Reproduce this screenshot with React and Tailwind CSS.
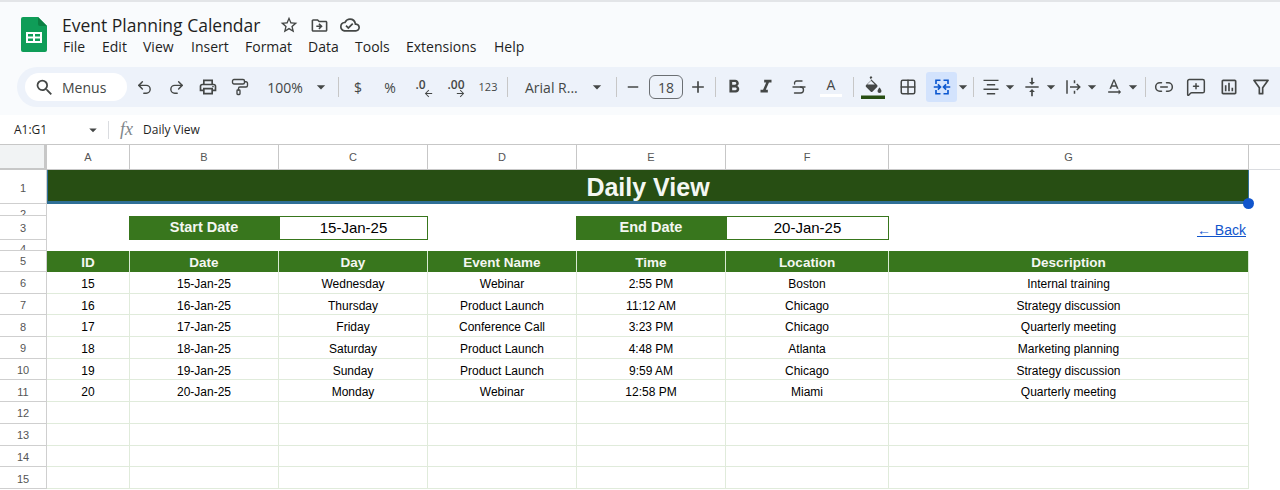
import React from "react";
import {
  MdOutlineStarBorder, MdOutlineDriveFileMove, MdOutlineCloudDone, MdSearch,
  MdOutlinePrint, MdArrowDropDown, MdRemove, MdAdd, MdFormatBold, MdFormatItalic,
  MdTextRotationNone, MdOutlineInsertChart, MdArrowBack, MdArrowForward,
} from "react-icons/md";
import { Undo2, Redo2, PaintRoller, Strikethrough, Grid2x2, Link2, MessageSquarePlus } from "lucide-react";

const menus = [
  ["File", "w-[39px]"], ["Edit", "w-[41px]"], ["View", "w-[48px]"], ["Insert", "w-[54px]"], ["Format", "w-[63px]"],
  ["Data", "w-[47px]"], ["Tools", "w-[51px]"], ["Extensions", "w-[88px]"], ["Help", "w-[40px]"],
];

const columns = ["A", "B", "C", "D", "E", "F", "G"];
const heads = ["ID", "Date", "Day", "Event Name", "Time", "Location", "Description"];
const events = [
  ["15", "15-Jan-25", "Wednesday", "Webinar", "2:55 PM", "Boston", "Internal training"],
  ["16", "16-Jan-25", "Thursday", "Product Launch", "11:12 AM", "Chicago", "Strategy discussion"],
  ["17", "17-Jan-25", "Friday", "Conference Call", "3:23 PM", "Chicago", "Quarterly meeting"],
  ["18", "18-Jan-25", "Saturday", "Product Launch", "4:48 PM", "Atlanta", "Marketing planning"],
  ["19", "19-Jan-25", "Sunday", "Product Launch", "9:59 AM", "Chicago", "Strategy discussion"],
  ["20", "20-Jan-25", "Monday", "Webinar", "12:58 PM", "Miami", "Quarterly meeting"],
  ["", "", "", "", "", "", ""],
  ["", "", "", "", "", "", ""],
  ["", "", "", "", "", "", ""],
  ["", "", "", "", "", "", ""],
];

const Btn = ({ children, className = "w-8" }) => (
  <div className={`relative flex h-full shrink-0 items-center justify-center text-[#444746] ${className}`}>{children}</div>
);
const Sep = ({ className = "" }) => <div className={`h-5 w-px shrink-0 bg-[#c7c7c7] ${className}`} />;
const Caret = ({ className = "w-[10px]" }) => (
  <Btn className={className}><MdArrowDropDown size={20} className="shrink-0" /></Btn>
);

const RowNum = ({ n, className = "items-center pt-[2px]" }) => (
  <div className={`flex justify-center overflow-hidden border-r border-b border-[#cfcfcf] text-[11px] leading-4 text-[#555] ${className}`}>{n}</div>
);

const SheetsLogo = () => (
  <svg width="26" height="35" viewBox="0 0 26 35" className="shrink-0">
    <path d="M2 0h15l9 9v24a2 2 0 0 1-2 2H2a2 2 0 0 1-2-2V2a2 2 0 0 1 2-2z" fill="#0f9d58" />
    <path d="M17 0l9 9h-7a2 2 0 0 1-2-2z" fill="#0b8043" />
    <path d="M5 15h16v11H5z" fill="#fff" />
    <path d="M7 17v2.5h5V17zM14 17v2.5h5V17zM7 21.5V24h5v-2.5zM14 21.5V24h5v-2.5z" fill="#0f9d58" />
  </svg>
);

const MergeIcon = () => (
  <svg width="18" height="18" viewBox="0 0 24 24" fill="none" stroke="#0b57d0" strokeWidth="2.2">
    <path d="M4 8V3h6M4 16v5h6M20 8V3h-6M20 16v5h-6" />
    <path d="M1 12h8M6.500 8.500L10 12l-3.500 3.500M23 12h-8M17.500 8.500L14 12l3.500 3.500" />
  </svg>
);

const WrapIcon = () => (
  <svg width="18" height="18" viewBox="0 0 24 24" fill="none" stroke="#444746" strokeWidth="2">
    <path d="M4 3v18M14 3v4M14 17v4M8 12h13M17 8l4 4-4 4" />
  </svg>
);

const FillIcon = () => (
  <svg width="26" height="26" viewBox="0 0 26 26">
    <path d="M11 2l1.400 1.400-1.500 1.500 6.200 6.200a1.400 1.400 0 0 1 0 2l-4.500 4.500a1.400 1.400 0 0 1-2 0l-4.500-4.500a1.400 1.400 0 0 1 0-2l5.200-5.200L9.600 3.400zM11 6.800L7.200 10.600h7.600z" fill="#444746" />
    <path d="M19.500 13.500s2 2.200 2 3.500a2 2 0 0 1-4 0c0-1.300 2-3.500 2-3.500z" fill="#444746" />
    <path d="M1 21.500h24V25H1z" fill="#274e13" />
  </svg>
);

const AlignIcon = () => (
  <svg width="20" height="20" viewBox="0 0 24 24" fill="none" stroke="#444746" strokeWidth="1.700">
    <path d="M3 4h18M7 9.300h10M3 14.600h18M7 20h10" />
  </svg>
);

const ValignIcon = () => (
  <svg width="20" height="20" viewBox="0 0 24 24" fill="#444746">
    <path d="M4 11h16v2H4zM12 9.500L8.500 6H11V1h2v5h2.500zM12 14.500l3.500 3.500H13v5h-2v-5H8.500z" />
  </svg>
);

const FunnelIcon = () => (
  <svg width="20" height="20" viewBox="0 0 24 24" fill="none" stroke="#444746" strokeWidth="2" strokeLinejoin="round">
    <path d="M3.500 4h17L14 13v7h-4v-7z" />
  </svg>
);

export default function App() {
  return (
    <div className="h-[490px] w-[1280px] overflow-hidden bg-white font-['Open_Sans',sans-serif]">
      <div className="h-[115px] border-t-2 border-[#e3e5e8] bg-[#f9fbfd]">
        <div className="flex h-[65px] items-start pt-[15px] pl-[21px]">
          <SheetsLogo />
          <div className="ml-[15px] -mt-[4px]">
            <div className="flex h-[24px] items-center">
              <span className="w-[217px] text-[17.5px] leading-6 text-[#1f1f1f]">Event Planning Calendar</span>
              <MdOutlineStarBorder size={20} className="text-[#444746]" />
              <MdOutlineDriveFileMove size={19} className="ml-[11px] text-[#444746]" />
              <MdOutlineCloudDone size={20} className="ml-[11px] text-[#444746]" />
            </div>
            <div className="ml-px flex text-[14px] leading-5 text-[#1f1f1f]">
              {menus.map(([m, w]) => (
                <div key={m} className={w}>{m}</div>
              ))}
            </div>
          </div>
        </div>

        <div className="ml-[17px] flex h-[40px] items-center rounded-l-full bg-[#edf2fa] pl-2 text-[#444746]">
          <div className="mr-px flex h-[28px] w-[102px] shrink-0 items-center rounded-full bg-white pl-[9px] text-[14px]">
            <MdSearch size={21} className="shrink-0" />
            <span className="ml-[7px]">Menus</span>
          </div>
          <Btn><Undo2 size={17} strokeWidth={2} /></Btn>
          <Btn><Redo2 size={17} strokeWidth={2} /></Btn>
          <Btn><MdOutlinePrint size={20} /></Btn>
          <Btn><PaintRoller size={18} strokeWidth={1.8} /></Btn>
          <Btn className="w-[58px] text-[14px]">100%</Btn>
          <Caret className="w-[14px]" />
          <Sep className="ml-[10px] mr-[3px]" />
          <Btn className="w-8 text-[14px]">$</Btn>
          <Btn className="w-8 text-[14px]">%</Btn>
          <Btn className="ml-px w-8 text-[12px] font-semibold">
            <span className="mb-[5px] mr-[5px]">.0</span>
            <MdArrowBack size={11} className="absolute right-[5px] bottom-[8px]" />
          </Btn>
          <Btn className="ml-px w-8 text-[12px] font-semibold">
            <span className="mb-[5px]">.00</span>
            <MdArrowForward size={11} className="absolute right-[6px] bottom-[8px]" />
          </Btn>
          <Btn className="w-8 text-[11px]">123</Btn>
          <Sep className="ml-[3px]" />
          <div className="ml-[17px] w-[65px] shrink-0 text-[14px]">Arial R...</div>
          <Caret className="w-[14px]" />
          <Sep className="ml-[12px]" />
          <Btn><MdRemove size={18} /></Btn>
          <div className="flex h-[24px] w-[34px] shrink-0 items-center justify-center rounded-md border border-[#6b6f73] text-[14px]">18</div>
          <Btn className="w-[30px]"><MdAdd size={20} /></Btn>
          <Sep className="ml-[2px] mr-[2px]" />
          <Btn><MdFormatBold size={22} /></Btn>
          <Btn><MdFormatItalic size={22} /></Btn>
          <Btn className="ml-px w-8"><Strikethrough size={18} strokeWidth={1.8} /></Btn>
          <Btn className="w-8">
            <span className="mb-[5px] text-[14px] leading-4">A</span>
            <span className="absolute bottom-[10px] left-[5px] h-[3px] w-[22px] bg-white" />
          </Btn>
          <Sep className="ml-[6px] mr-[3px]" />
          <Btn><FillIcon /></Btn>
          <Btn className="ml-[3px] w-8"><Grid2x2 size={18} strokeWidth={2} /></Btn>
          <div className="ml-[2px] flex h-[30px] w-[31px] shrink-0 items-center justify-center rounded-[3px] bg-[#d3e3fd]"><MergeIcon /></div>
          <Caret className="w-[11px]" />
          <Sep className="ml-[5px] mr-[3px]" />
          <Btn className="w-[28px]"><AlignIcon /></Btn>
          <Caret />
          <div className="w-[3px] shrink-0" />
          <Btn className="w-[28px]"><ValignIcon /></Btn>
          <Caret />
          <div className="w-[3px] shrink-0" />
          <Btn className="w-[28px]"><WrapIcon /></Btn>
          <Caret />
          <div className="w-[3px] shrink-0" />
          <Btn className="w-[28px]"><MdTextRotationNone size={20} /></Btn>
          <Caret />
          <Sep className="ml-[7px] mr-[2px]" />
          <Btn><Link2 size={20} strokeWidth={1.8} /></Btn>
          <Btn><MessageSquarePlus size={20} strokeWidth={1.8} /></Btn>
          <Btn className="ml-px w-8"><MdOutlineInsertChart size={20} /></Btn>
          <Btn><FunnelIcon /></Btn>
        </div>
      </div>

      <div className="flex h-[29px] items-center bg-white text-[12px] text-[#1f1f1f]">
        <span className="ml-[14px] w-[70px]">A1:G1</span>
        <MdArrowDropDown size={18} className="text-[#444746]" />
        <div className="ml-[6px] h-[18px] w-px bg-[#dadce0]" />
        <span className="ml-[11px] font-['Liberation_Serif',serif] text-[18px] text-[#80868b] italic">fx</span>
        <span className="ml-[10px]">Daily View</span>
      </div>

      <div className="grid grid-cols-[47px_83px_149px_149px_149px_149px_163px_360px_1fr] grid-rows-[25px_34px_12px_24px_11px_21px_repeat(10,21.7px)] border-t border-[#c7c7c7] font-['Liberation_Sans',sans-serif] text-[12px] text-black">
        <div className="border-r-[3px] border-b-2 border-[#c7c7c7] bg-[#f1f3f4]" />
        {columns.map((c) => (
          <div key={c} className="flex items-center justify-center border-r border-b border-[#c7c7c7] text-[11px] text-[#555]">{c}</div>
        ))}
        <div className="border-b border-[#dadce0]" />

        <RowNum n="1" />
        <div className="relative col-span-7 flex items-center justify-center border-b-[3px] border-l border-r border-[#2f6f96] bg-[#274e13] pt-[4px] text-[25px] font-bold text-[#f4f7f2]">
          Daily View
          <span className="absolute right-[-6px] bottom-[-8px] h-[11px] w-[11px] rounded-full bg-[#1155cc]" />
        </div>
        <div />

        <RowNum n="2" className="items-start pt-[2px]" />
        <div className="col-span-8" />

        <RowNum n="3" className="items-center" />
        <div />
        <div className="-ml-px flex items-center justify-center bg-[#38761d] text-[14.5px] font-bold text-[#f4f7f2]">Start Date</div>
        <div className="flex items-center justify-center border border-[#38761d] text-[15px]">15-Jan-25</div>
        <div />
        <div className="-ml-px flex items-center justify-center bg-[#38761d] text-[14.5px] font-bold text-[#f4f7f2]">End Date</div>
        <div className="flex items-center justify-center border border-[#38761d] text-[15px]">20-Jan-25</div>
        <div className="flex items-center justify-end pt-[4px] pr-[3px] text-[14px] text-[#1155cc] underline">← Back</div>
        <div />

        <RowNum n="4" className="items-start pt-[1px]" />
        <div className="col-span-8" />

        <RowNum n="5" className="items-center" />
        {heads.map((h) => (
          <div key={h} className="flex items-center justify-center border-r border-[#d9ead3] bg-[#38761d] pt-[3px] text-[13.5px] font-bold text-[#f4f7f2]">{h}</div>
        ))}
        <div />

        {events.map((row, i) => (
          <React.Fragment key={i}>
            <RowNum n={i + 6} />
            {row.map((v, j) => (
              <div key={j} className="flex items-center justify-center border-r border-b border-[#e0ebdb] pt-[3px]">{v}</div>
            ))}
            <div />
          </React.Fragment>
        ))}
      </div>
    </div>
  );
}
